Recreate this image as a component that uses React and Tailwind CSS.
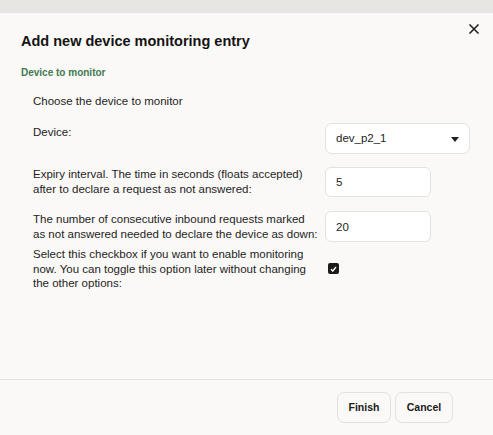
import { useState } from "react";

function CloseIcon() {
  return (
    <svg width="10" height="10" viewBox="0 0 10 10" className="text-[#1a1a1a]">
      <path d="M1 1 L9 9 M9 1 L1 9" stroke="currentColor" strokeWidth="1.5" strokeLinecap="square" />
    </svg>
  );
}

function Row({ label, children, className = "", align = "items-center", labelClass = "" }) {
  return (
    <div className={`grid grid-cols-[292px_1fr] ${align} ${className}`}>
      <div className={`whitespace-nowrap text-[11.5px] leading-[15px] ${labelClass}`}>{label}</div>
      <div>{children}</div>
    </div>
  );
}

export default function App() {
  const [device, setDevice] = useState("dev_p2_1");
  const [expiry, setExpiry] = useState("5");
  const [count, setCount] = useState("20");
  const [enabled, setEnabled] = useState(true);

  return (
    <div className="flex h-[435px] flex-col bg-[#faf9f7] font-['Liberation_Sans',Arial,sans-serif] text-[#1e1e1e]">
      <div className="h-[13px] bg-[#e8e6e2]" />

      <div className="flex items-start justify-between pl-[21px] pr-[14px] pt-[11px]">
        <h2 className="mt-[7px] text-[14.5px] font-bold leading-[20px] text-[#141414]">
          Add new device monitoring entry
        </h2>
        <button type="button" className="flex h-[10px] w-[10px] items-center justify-center">
          <CloseIcon />
        </button>
      </div>

      <div className="mt-[15px] pl-[21px] text-[10px] font-bold leading-[14px] text-[#3f7a50]">
        Device to monitor
      </div>

      <div className="mt-[14px] pl-[33px] text-[11.5px] leading-[15px]">Choose the device to monitor</div>

      <div className="mt-[14px] pl-[33px]">
        <Row label="Device:" align="items-start" labelClass="pt-[2px]">
          <div className="relative h-[31px] w-[145px]">
            <select
              value={device}
              onChange={(e) => setDevice(e.target.value)}
              className="h-full w-full appearance-none rounded-[7px] border border-[#e4e2de] bg-white pl-[10px] text-[11.5px] text-[#1e1e1e] outline-none"
            >
              <option value="dev_p2_1">dev_p2_1</option>
            </select>
            <svg
              width="8"
              height="5"
              viewBox="0 0 8 5"
              className="pointer-events-none absolute right-[11px] top-[14px] text-[#222]"
            >
              <path d="M0 0 H8 L4 5 Z" fill="currentColor" />
            </svg>
          </div>
        </Row>

        <Row
          className="mt-[13px]"
          label={
            <>
              Expiry interval. The time in seconds (floats accepted)
              <br />
              after to declare a request as not answered:
            </>
          }
        >
          <input
            value={expiry}
            onChange={(e) => setExpiry(e.target.value)}
            className="h-[30px] w-[106px] rounded-[6px] border border-[#e4e2de] bg-white pl-[10px] text-[11.5px] text-[#1e1e1e] outline-none"
          />
        </Row>

        <Row
          className="mt-[14px]"
          label={
            <>
              The number of consecutive inbound requests marked
              <br />
              as not answered needed to declare the device as down:
            </>
          }
        >
          <input
            value={count}
            onChange={(e) => setCount(e.target.value)}
            className="h-[31px] w-[106px] rounded-[6px] border border-[#e4e2de] bg-white pl-[10px] text-[11.5px] text-[#1e1e1e] outline-none"
          />
        </Row>

        <Row
          className="mt-[5px]"
          labelClass="!leading-[14.5px]"
          label={
            <>
              Select this checkbox if you want to enable monitoring
              <br />
              now. You can toggle this option later without changing
              <br />
              the other options:
            </>
          }
        >
          <button
            type="button"
            onClick={() => setEnabled(!enabled)}
            className="ml-[3px] flex h-[11px] w-[11px] items-center justify-center rounded-[2px] bg-[#1b1b1b]"
          >
            {enabled && (
              <svg width="7" height="6" viewBox="0 0 7 6">
                <path d="M1 3.2 L2.8 5 L6 1" fill="none" stroke="white" strokeWidth="1.4" />
              </svg>
            )}
          </button>
        </Row>
      </div>

      <div className="flex-1" />

      <div className="flex justify-end gap-[4px] border-t border-[#e3e1dd] pb-[12px] pr-[40px] pt-[12px]">
        <button
          type="button"
          className="h-[31px] w-[54px] rounded-[7px] border border-[#e3e1dd] text-[10.5px] font-bold text-[#1a1a1a]"
        >
          Finish
        </button>
        <button
          type="button"
          className="h-[31px] w-[58px] rounded-[7px] border border-[#e3e1dd] text-[10.5px] font-bold text-[#1a1a1a]"
        >
          Cancel
        </button>
      </div>
    </div>
  );
}
